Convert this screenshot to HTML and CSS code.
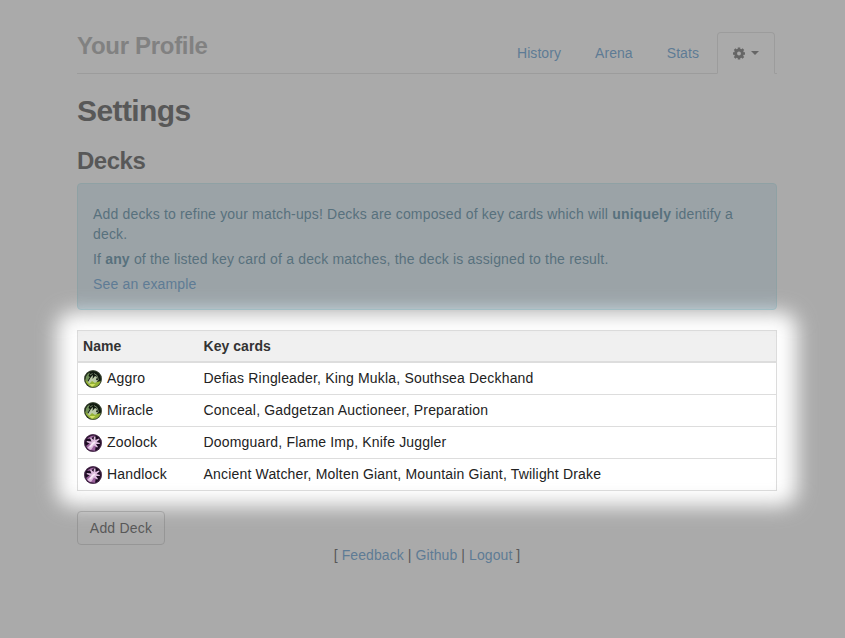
FILE: index.html
```html
<!DOCTYPE html>
<html lang="en">
<head>
<meta charset="utf-8">
<title>Your Profile</title>
<link rel="stylesheet" href="styles.css">
</head>
<body>
<svg class="defs" aria-hidden="true">
  <defs>
    <symbol id="rogue" viewBox="0 0 18 18">
      <circle cx="9" cy="9" r="8.8" fill="#10190f"/>
      <path d="M.8 9Q2 15 8 17.400Q15 18 16.800 11L13 12 9 10 5 12Z" fill="#94b335"/>
      <path d="M1.500 9Q2 4 6 2.500L4.500 6 6 7 3 12Z" fill="#71905a"/>
      <path d="M4 12L7 7 9 5 8.500 9 11 6 13 7 12 10 14.500 10.500 11 13 8 11 5 14Z" fill="#bccba8"/>
      <path d="M10 3.500L13 5.500 14.500 10M6 5L8.500 3.500" fill="none" stroke="#718065" stroke-width="1"/>
      <path d="M5.500 14L11.500 14 8 17Z" fill="#d4e466"/>
      <circle cx="9" cy="9" r="8.400" fill="none" stroke="#4b583f" stroke-width=".7"/>
    </symbol>
    <symbol id="warlock" viewBox="0 0 18 18">
      <circle cx="9" cy="9" r="8.800" fill="#1c0c21"/>
      <path d="M3 5Q6 1 11 1.500L7 4.500ZM2 12L7 8 12 11 11 17 5 16Z" fill="#9b629d"/>
      <path d="M3 14L7 10 2.500 8 3 7 7.500 7.500 6 4 7 3.500 9.500 6 10 2.500 11.500 2.500 11.500 6 15 4.500 15.500 5.500 12.500 8 16 9 15.500 10 12 10 14 13 13 13.500 10 11.500 7 16Z" fill="#dfbedf"/>
      <path d="M6 13L9 9.500 11 8" fill="none" stroke="#f8eaf7" stroke-width="1.800"/>
      <circle cx="9" cy="9" r="8.400" fill="none" stroke="#57305b" stroke-width=".8"/>
    </symbol>
  </defs>
</svg>
<div class="container">
  <header class="header">
    <div class="brand">Your Profile</div>
    <nav class="tabs">
      <a class="tab" href="#">History</a>
      <a class="tab" href="#">Arena</a>
      <a class="tab" href="#">Stats</a>
      <a class="tab active" href="#" aria-label="Settings">
        <svg class="gear" viewBox="0 0 12 12"><circle cx="6" cy="6" r="3.400" fill="none" stroke="currentColor" stroke-width="2.900"/><path d="M6 0V2.500M6 9.500V12M0 6H2.500M9.500 6H12M1.600 1.600L3.400 3.400M8.600 8.600L10.400 10.400M10.400 1.600L8.600 3.400M3.400 8.600L1.600 10.400" stroke="currentColor" stroke-width="2.500"/></svg>
        <span class="caret"></span>
      </a>
    </nav>
  </header>
  <h1>Settings</h1>
  <h2>Decks</h2>
  <section class="alert">
    <p>Add decks to refine your match-ups! Decks are composed of key cards which will <strong>uniquely</strong> identify a deck.</p>
    <p>If <strong>any</strong> of the listed key card of a deck matches, the deck is assigned to the result.</p>
    <p><a href="#">See an example</a></p>
  </section>
  <div class="decks">
    <table>
      <thead><tr><th class="name">Name</th><th>Key cards</th></tr></thead>
      <tbody>
        <tr><td><span class="deck"><svg class="icon"><use href="#rogue"/></svg>Aggro</span></td><td>Defias Ringleader, King Mukla, Southsea Deckhand</td></tr>
        <tr><td><span class="deck"><svg class="icon"><use href="#rogue"/></svg>Miracle</span></td><td>Conceal, Gadgetzan Auctioneer, Preparation</td></tr>
        <tr><td><span class="deck"><svg class="icon"><use href="#warlock"/></svg>Zoolock</span></td><td>Doomguard, Flame Imp, Knife Juggler</td></tr>
        <tr><td><span class="deck"><svg class="icon"><use href="#warlock"/></svg>Handlock</span></td><td>Ancient Watcher, Molten Giant, Mountain Giant, Twilight Drake</td></tr>
      </tbody>
    </table>
    <div class="spotlight"></div>
  </div>
  <button class="btn">Add Deck</button>
  <footer>[ <a href="#">Feedback</a> | <a href="#">Github</a> | <a href="#">Logout</a> ]</footer>
</div>
</body>
</html>
```

FILE: styles.css
```css
* { box-sizing: border-box; }
html, body { height: 100%; }
body {
  margin: 0;
  overflow: hidden;
  background: #fff;
  color: #333;
  font: 14px/20px "Liberation Sans", Arial, sans-serif;
}
a { color: #428bca; text-decoration: none; }
.defs { position: absolute; width: 0; height: 0; }
.container { width: 700px; margin-left: 77px; padding-top: 32px; }
.header {
  display: flex;
  justify-content: space-between;
  height: 42px;
  border-bottom: 1px solid #ddd;
}
.brand { font-size: 24px; line-height: 28px; font-weight: bold; color: #999; letter-spacing: -.3px; }
.tabs { display: flex; gap: 2px; padding-right: 2px; }
.tab { height: 42px; padding: 11px 16px; letter-spacing: .07px; }
.tab.active {
  display: flex;
  align-items: center;
  gap: 6px;
  width: 58px;
  padding: 0 15px;
  color: #555;
  background: #fff;
  border: 1px solid #ddd;
  border-bottom-color: transparent;
  border-radius: 4px 4px 0 0;
}
.gear { width: 13px; height: 13px; }
.caret { border: 4px solid transparent; border-top-color: currentColor; border-bottom: 0; }
h1, h2 { margin: 0; font-weight: bold; }
h1 { margin-top: 20px; font-size: 30px; line-height: 33px; letter-spacing: -.6px; }
h2 { margin-top: 21px; font-size: 24px; line-height: 26px; letter-spacing: -.5px; }
.alert {
  height: 127px;
  margin-top: 9px;
  padding: 20px 15px 15px;
  color: #31708f;
  background: #d9edf7;
  border: 1px solid #bce8f1;
  border-radius: 4px;
  letter-spacing: .17px;
}
.alert p { margin: 0 0 5px; }
.decks { position: relative; margin: 20px 0; }
table { width: 100%; border-collapse: collapse; border: 1px solid #ddd; }
th, td { height: 32px; padding: 0 5px; text-align: left; border-top: 1px solid #ddd; }
th { height: 31px; background: #f0f0f0; border-bottom: 2px solid #ddd; letter-spacing: .05px; }
td { padding-bottom: 1px; letter-spacing: .18px; color: #222; }
tbody tr:first-child td { height: 33px; padding-bottom: 0; }
.name { width: 121px; }
.deck { display: flex; align-items: center; }
.icon { width: 18px; height: 18px; margin: 2px 5px 0 1px; }
/* Dims the page around a soft-edged opening over the deck table. */
.spotlight {
  position: absolute;
  z-index: 2;
  inset: -18px -20px -15px;
  border-radius: 16px;
  box-shadow: 0 0 0 1200px rgba(113, 113, 113, .6);
  filter: blur(10px);
  pointer-events: none;
}
.btn {
  display: block;
  width: 88px;
  height: 34px;
  padding: 0;
  font: inherit;
  letter-spacing: .2px;
  color: #333;
  background: #fff;
  border: 1px solid #ccc;
  border-radius: 4px;
}
footer { text-align: center; color: #333; letter-spacing: .09px; }
```
